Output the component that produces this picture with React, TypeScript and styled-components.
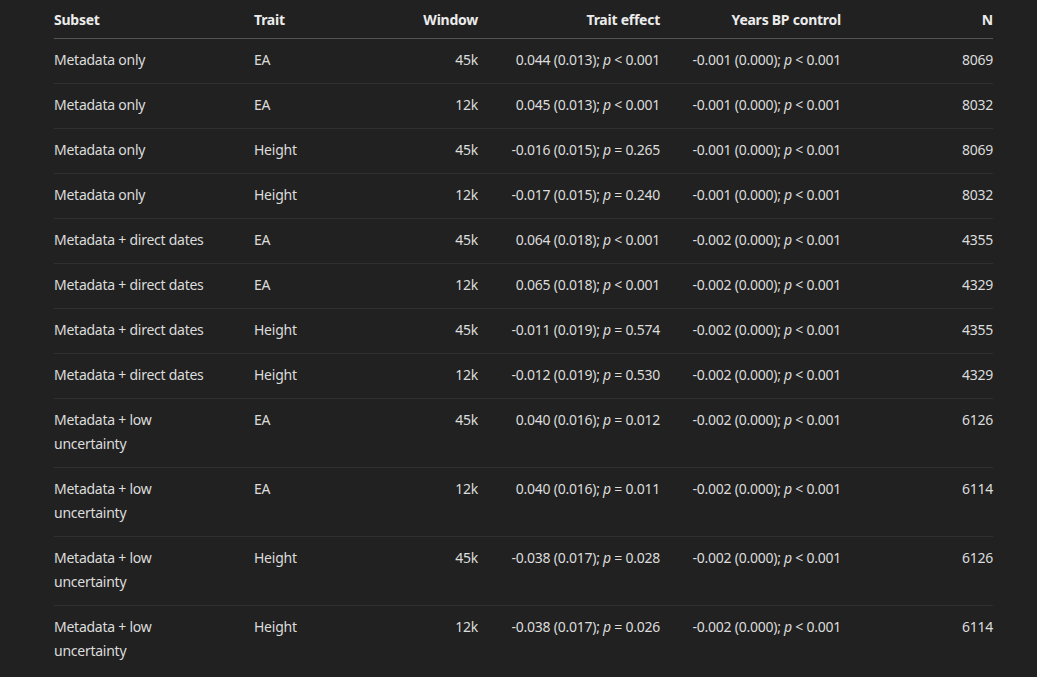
import React from "react";
import styled, { createGlobalStyle } from "styled-components";

const Global = createGlobalStyle`
  html, body { margin: 0; padding: 0; background: #212121; }
  body { font-family: "Noto Sans", "Open Sans", sans-serif; }
`;

const Page = styled.div`
  padding: 0 44px 0 54px;
  background: #212121;
  min-height: 677px;
  box-sizing: border-box;
`;

const Table = styled.table`
  width: 939px;
  border-collapse: collapse;
  table-layout: fixed;
  font-size: 14px;
  line-height: 24px;
  letter-spacing: -0.25px;
  color: #dcdcdc;
`;

type Align = { $right?: boolean; $pr?: number };

const Head = styled.th<Align>`
  padding: 8px ${(p) => p.$pr ?? 0}px 6px 0;
  text-align: ${(p) => (p.$right ? "right" : "left")};
  font-weight: 700;
  color: #ececec;
  border-bottom: 1px solid #555555;
  vertical-align: top;
`;

const Row = styled.tr`
  border-bottom: 1px solid #303030;
  &:last-child { border-bottom: none; }
`;

const Cell = styled.td<Align>`
  padding: 9px ${(p) => p.$pr ?? 0}px 11px 0;
  text-align: ${(p) => (p.$right ? "right" : "left")};
  vertical-align: top;
  font-weight: 400;
`;

const P = styled.i`
  font-style: italic;
`;

type R = [string, string, string, string, string, string];

const rows: R[] = [
  ["Metadata only", "EA", "45k", "0.044 (0.013); ~ < 0.001", "-0.001 (0.000); ~ < 0.001", "8069"],
  ["Metadata only", "EA", "12k", "0.045 (0.013); ~ < 0.001", "-0.001 (0.000); ~ < 0.001", "8032"],
  ["Metadata only", "Height", "45k", "-0.016 (0.015); ~ = 0.265", "-0.001 (0.000); ~ < 0.001", "8069"],
  ["Metadata only", "Height", "12k", "-0.017 (0.015); ~ = 0.240", "-0.001 (0.000); ~ < 0.001", "8032"],
  ["Metadata + direct dates", "EA", "45k", "0.064 (0.018); ~ < 0.001", "-0.002 (0.000); ~ < 0.001", "4355"],
  ["Metadata + direct dates", "EA", "12k", "0.065 (0.018); ~ < 0.001", "-0.002 (0.000); ~ < 0.001", "4329"],
  ["Metadata + direct dates", "Height", "45k", "-0.011 (0.019); ~ = 0.574", "-0.002 (0.000); ~ < 0.001", "4355"],
  ["Metadata + direct dates", "Height", "12k", "-0.012 (0.019); ~ = 0.530", "-0.002 (0.000); ~ < 0.001", "4329"],
  ["Metadata + low uncertainty", "EA", "45k", "0.040 (0.016); ~ = 0.012", "-0.002 (0.000); ~ < 0.001", "6126"],
  ["Metadata + low uncertainty", "EA", "12k", "0.040 (0.016); ~ = 0.011", "-0.002 (0.000); ~ < 0.001", "6114"],
  ["Metadata + low uncertainty", "Height", "45k", "-0.038 (0.017); ~ = 0.028", "-0.002 (0.000); ~ < 0.001", "6126"],
  ["Metadata + low uncertainty", "Height", "12k", "-0.038 (0.017); ~ = 0.026", "-0.002 (0.000); ~ < 0.001", "6114"],
];

const Stat: React.FC<{ text: string }> = ({ text }) => {
  const [before, after] = text.split("~");
  return (
    <>
      {before}
      <P>p</P>
      {after}
    </>
  );
};

export default function App() {
  return (
    <Page>
      <Global />
      <Table>
        <colgroup>
          <col style={{ width: 200 }} />
          <col style={{ width: 144 }} />
          <col style={{ width: 80 }} />
          <col style={{ width: 182 }} />
          <col style={{ width: 181 }} />
          <col style={{ width: 152 }} />
        </colgroup>
        <thead>
          <tr>
            <Head $pr={36}>Subset</Head>
            <Head>Trait</Head>
            <Head $right>Window</Head>
            <Head $right>Trait effect</Head>
            <Head $right>Years BP control</Head>
            <Head $right>N</Head>
          </tr>
        </thead>
        <tbody>
          {rows.map((r, i) => (
            <Row key={i}>
              <Cell $pr={36}>{r[0]}</Cell>
              <Cell>{r[1]}</Cell>
              <Cell $right>{r[2]}</Cell>
              <Cell $right>
                <Stat text={r[3]} />
              </Cell>
              <Cell $right>
                <Stat text={r[4]} />
              </Cell>
              <Cell $right>{r[5]}</Cell>
            </Row>
          ))}
        </tbody>
      </Table>
    </Page>
  );
}
